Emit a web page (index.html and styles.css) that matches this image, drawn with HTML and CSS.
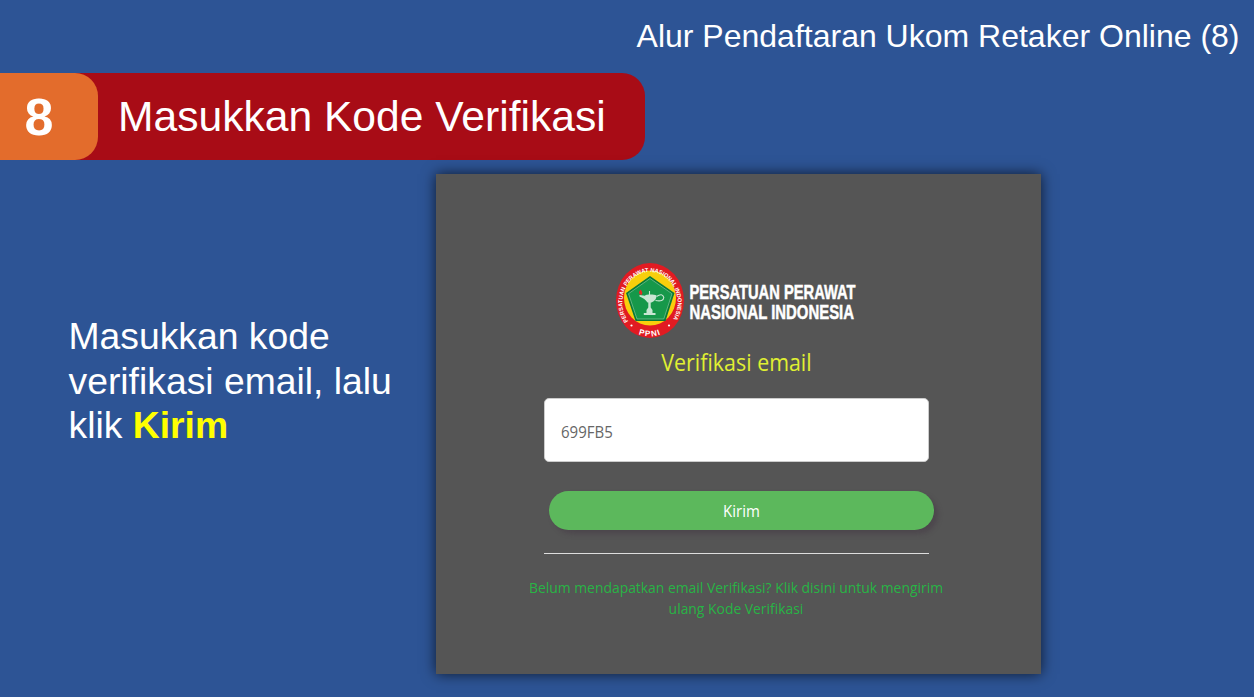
FILE: index.html
```html
<!DOCTYPE html>
<html lang="id">
<head>
<meta charset="utf-8">
<title>Alur Pendaftaran Ukom Retaker Online</title>
<link rel="stylesheet" href="styles.css">
</head>
<body>
<header class="top">Alur Pendaftaran Ukom Retaker Online (8)</header>
<div class="banner">
  <div class="number">8</div>
  <h1 class="title">Masukkan Kode Verifikasi</h1>
</div>
<main class="content">
  <p class="note">Masukkan kode<br>verifikasi email, lalu<br>klik <b>Kirim</b></p>
  <section class="panel">
    <svg class="brand" width="300" height="78" viewBox="614 262 300 78" role="img">
      <defs>
        <path id="ring" d="M630 323.500A27.600 30.500 0 1 1 670 323.500"/>
        <path id="arc-bottom" d="M624 322A32 34.500 0 0 0 676 322"/>
      </defs>
      <ellipse cx="650" cy="300.500" rx="34" ry="37.400" fill="#e11b22"/>
      <ellipse cx="650" cy="298" rx="26" ry="27.500" fill="#f8cf0c"/>
      <path d="M650 276L674.500 293L665.500 321H635.500L626 293Z" fill="#087a38"/>
      <path d="M650 278.500L672 293.700L663.800 319H637L628.500 293.700Z" fill="#16984a" stroke="#7fc79a" stroke-width="0.700"/>
      <g fill="#c9e6d3">
        <path d="M639.500 295L645 295.700C646 294.300 654 294.300 656.500 295.500Q656.500 300.500 651.500 302.500H647.500Q645 298.500 639.500 296.500Z"/>
        <path d="M648.300 302H650.700V307.500L652.500 310V313H646.500V310L648.300 307.500ZM643.800 313H655.500V315H643.800Z"/>
      </g>
      <path d="M655.500 300.500Q663.500 302 663.800 297.500Q662.500 292.500 656.500 296.500M649.500 296V291" fill="none" stroke="#c9e6d3" stroke-width="1.100"/>
      <path d="M640.500 289.500Q643.500 292.500 641.500 295Q637 294 640.500 289.500Z" fill="#e22c25"/>
      <text class="ring-name"><textPath href="#ring" startOffset="3" textLength="128" lengthAdjust="spacingAndGlyphs">PERSATUAN PERAWAT NASIONAL INDONESIA</textPath></text>
      <text class="ring-short"><textPath href="#arc-bottom" startOffset="50%" text-anchor="middle">PPNI</textPath></text>
      <circle cx="631.500" cy="325.500" r="1.100" fill="#fff"/>
      <circle cx="669" cy="325.500" r="1.100" fill="#fff"/>
      <text class="brand-name" x="689.500" y="299" textLength="166" lengthAdjust="spacingAndGlyphs">PERSATUAN PERAWAT</text>
      <text class="brand-name" x="689.500" y="319.300" textLength="164.500" lengthAdjust="spacingAndGlyphs">NASIONAL INDONESIA</text>
    </svg>
    <h2 class="heading"><span class="tall">Verifikasi email</span></h2>
    <div class="field"><span class="tall">699FB5</span></div>
    <div class="button"><span class="tall">Kirim</span></div>
    <hr class="rule">
    <p class="resend"><span class="tall">Belum mendapatkan email Verifikasi? Klik disini untuk mengirim</span><br><span class="tall">ulang Kode Verifikasi</span></p>
  </section>
</main>
</body>
</html>
```
FILE: styles.css
```css
* { box-sizing: border-box; }
body {
  margin: 0;
  height: 697px;
  overflow: hidden;
  background: #2d5495;
  color: #fff;
  font-family: "Liberation Sans", Arial, sans-serif;
}
.top {
  height: 73px;
  padding: 18px 14.5px 0 0;
  font-size: 32px;
  line-height: 37px;
  text-align: right;
  white-space: nowrap;
}
.banner {
  display: flex;
  width: 645px;
  height: 87px;
  background: #a80c16;
  border-radius: 0 23px 23px 0;
}
.number {
  width: 98px;
  padding-left: 24.5px;
  background: #e36c2c;
  border-radius: 0 23px 23px 0;
  font-size: 52px;
  font-weight: bold;
  line-height: 89px;
}
.title {
  margin: 0;
  padding-left: 20px;
  font-size: 42.6px;
  font-weight: normal;
  line-height: 87px;
  white-space: nowrap;
}
.content {
  display: flex;
  padding-top: 14px;
}
.note {
  width: 436px;
  margin: 0;
  padding: 140px 0 0 68.5px;
  font-size: 37.3px;
  line-height: 44.5px;
  white-space: nowrap;
}
.note b { color: #ff0; }
.panel {
  display: flex;
  flex-direction: column;
  width: 605px;
  height: 500px;
  padding: 88px 0 0 108px;
  background: #555;
  box-shadow: 0 0 13px rgba(0, 0, 0, 0.7);
  font-family: "Open Sans", sans-serif;
}
.tall {
  display: inline-block;
  transform: scaleY(1.09);
}
.brand {
  flex: none;
  margin-left: 70px;
}
.ring-name { fill: #fff; font: bold 5.8px "Liberation Sans", sans-serif; }
.ring-short { fill: #fff; font: bold 8px "Liberation Sans", sans-serif; letter-spacing: 1.2px; }
.brand-name {
  fill: #fff;
  stroke: #fff;
  stroke-width: 0.5px;
  font: bold 19.5px "Liberation Sans", sans-serif;
}
.heading {
  width: 385px;
  height: 58px;
  margin: 0;
  padding-top: 7px;
  color: #e0f032;
  font-size: 21.4px;
  font-weight: normal;
  line-height: 30px;
  text-align: center;
}
.field {
  width: 385px;
  height: 64px;
  padding-left: 16px;
  background: #fff;
  border: 1px solid #ccc;
  border-radius: 5px;
  color: #666;
  font-size: 15px;
  line-height: 64px;
}
.button {
  width: 385px;
  height: 39px;
  margin: 29px 0 0 5px;
  background: #5cb85c;
  border-radius: 20px;
  box-shadow: 4px 4px 5px rgba(65, 50, 65, 0.4);
  font-size: 15px;
  line-height: 38px;
  text-align: center;
}
.rule {
  width: 385px;
  height: 1px;
  margin: 23px 0 0;
  border: 0;
  background: #ddd;
}
.resend {
  width: 416px;
  margin: 24px 0 0 -16px;
  color: #28b445;
  font-size: 13.9px;
  line-height: 20.5px;
  text-align: center;
  white-space: nowrap;
}
```
